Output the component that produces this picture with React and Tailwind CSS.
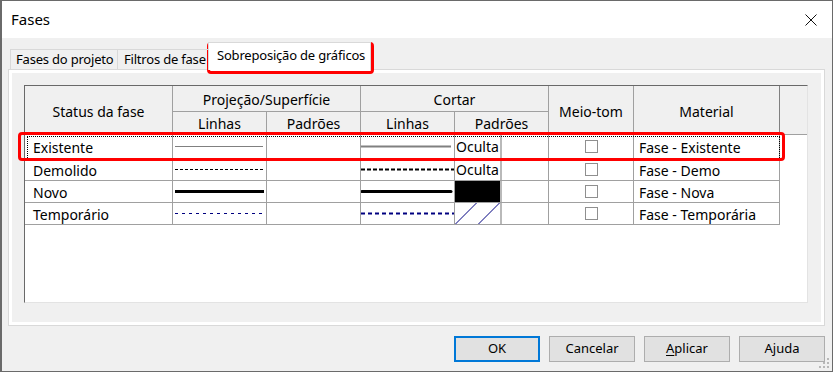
import React from 'react'

const rows = [
  {
    name: 'Existente',
    h: 'h-[24px]',
    proj: { color: '#808080', w: 1, x1: 2, x2: 90 },
    cut: { color: '#808080', w: 2, x1: 0, x2: 90 },
    pat: 'oculta',
    mat: 'Fase - Existente',
  },
  {
    name: 'Demolido',
    h: 'h-[22px]',
    proj: { color: '#000000', w: 1, x1: 2, x2: 90, dash: '3 2' },
    cut: { color: '#000000', w: 2, x1: 0, x2: 93, dash: '4 2' },
    pat: 'oculta',
    mat: 'Fase - Demo',
  },
  {
    name: 'Novo',
    h: 'h-[22px]',
    proj: { color: '#000000', w: 3, x1: 2, x2: 91 },
    cut: { color: '#000000', w: 3, x1: 1, x2: 90, cap: 'round' },
    pat: 'solid',
    mat: 'Fase - Nova',
  },
  {
    name: 'Temporário',
    h: 'h-[22px]',
    proj: { color: '#000080', w: 1, x1: 2, x2: 93, dash: '3 4' },
    cut: { color: '#000080', w: 2, x1: 0, x2: 93, dash: '4 3' },
    pat: 'hatch',
    mat: 'Fase - Temporária',
  },
]

function Stroke({ color, w, x1, x2, dash, cap }) {
  return (
    <svg width="93" height="21" className="block">
      <line
        x1={x1}
        x2={x2}
        y1="10.5"
        y2="10.5"
        stroke={color}
        strokeWidth={w}
        strokeDasharray={dash}
        strokeLinecap={cap || 'butt'}
      />
    </svg>
  )
}

function Pattern({ kind }) {
  if (kind === 'oculta') {
    return <span className="pl-px leading-none">Oculta</span>
  }
  if (kind === 'solid') {
    return <div className="h-full w-full bg-black" />
  }
  return (
    <svg width="45" height="21" className="block">
      <line x1="0.5" y1="21" x2="21.5" y2="0" stroke="#000080" strokeWidth="1" />
      <line x1="23.5" y1="21" x2="44.5" y2="0" stroke="#000080" strokeWidth="1" />
    </svg>
  )
}

export default function App() {
  const hd = 'bg-[#f0f0f0] border-r border-b border-[#a0a0a0] flex items-center justify-center'
  const cell = 'border-r border-b border-[#a0a0a0] flex items-center'

  return (
    <div className="relative w-[833px] h-[372px] border border-[#6a6a6a] border-l-2 bg-[#f0f0f0] flex flex-col font-['Noto_Sans',sans-serif] text-black overflow-hidden">
      {/* title bar */}
      <div className="h-[37px] bg-white flex items-center justify-between pl-[9px] pr-[15px] shrink-0">
        <span className="text-[15px] leading-none">Fases</span>
        <svg width="12" height="12" className="block">
          <path d="M0.5 0.5 L11.5 11.5 M11.5 0.5 L0.5 11.5" stroke="#111" strokeWidth="1" />
        </svg>
      </div>

      <div className="flex flex-col pl-[6px] pr-[7px] pt-[4px]">
        {/* tabs */}
        <div className="relative z-10 flex items-end pl-[2px] -mb-px text-[13px] tracking-[-0.2px]">
          <div className="w-[108px] h-[21px] border-l border-t border-r border-[#d9d9d9] flex items-center pl-[5px] whitespace-nowrap">
            Fases do projeto
          </div>
          <div className="w-[90px] h-[21px] border-t border-[#d9d9d9] flex items-center pl-[6px] whitespace-nowrap overflow-hidden">
            Filtros de fase
          </div>
          <div className="w-[163px] h-[28px] bg-white border-l border-t border-r border-[#d9d9d9] flex items-center pl-[8px] pb-[1px] whitespace-nowrap">
            Sobreposição de gráficos
          </div>
        </div>

        {/* tab page */}
        <div className="h-[257px] border border-[#d9d9d9]">
          <div className="h-full border-[3px] border-white bg-[#f0f0f0] pt-[12px] pl-[12px] pr-[13px]">
            <div className="relative h-[218px] border-l border-t border-[#696969] border-r border-b border-r-[#e3e3e3] border-b-[#e3e3e3] bg-white text-[14px]">
              {/* header */}
              <div className="flex">
                <div className={`${hd} w-[148px] h-[49px] pt-[3px]`}>Status da fase</div>
                <div className="flex flex-col w-[188px]">
                  <div className={`${hd} h-[26px] pt-[2px]`}>Projeção/Superfície</div>
                  <div className="flex">
                    <div className={`${hd} w-[94px] h-[23px]`}>Linhas</div>
                    <div className={`${hd} w-[94px] h-[23px]`}>Padrões</div>
                  </div>
                </div>
                <div className="flex flex-col w-[188px]">
                  <div className={`${hd} h-[26px] pt-[2px]`}>Cortar</div>
                  <div className="flex">
                    <div className={`${hd} w-[94px] h-[23px]`}>Linhas</div>
                    <div className={`${hd} w-[94px] h-[23px]`}>Padrões</div>
                  </div>
                </div>
                <div className={`${hd} w-[85px] h-[49px] pt-[3px]`}>Meio-tom</div>
                <div className={`${hd} w-[146px] h-[49px] pt-[3px] border-r-[#808080]`}>Material</div>
                <div className="bg-[#f0f0f0] border-b border-[#a0a0a0] flex-1 h-[49px]" />
              </div>

              {/* rows */}
              {rows.map((r) => (
                <div key={r.name} className={`flex ${r.h}`}>
                  <div className={`${cell} w-[148px] pl-[8px] pt-px`}>{r.name}</div>
                  <div className={`${cell} w-[94px]`}>
                    <Stroke {...r.proj} />
                  </div>
                  <div className={`${cell} w-[94px]`} />
                  <div className={`${cell} w-[94px]`}>
                    <Stroke {...r.cut} />
                  </div>
                  <div className={`${cell} w-[94px] items-stretch`}>
                    <div className="w-[47px] border-r-2 border-[#b9b9b9] flex items-center">
                      <Pattern kind={r.pat} />
                    </div>
                  </div>
                  <div className={`${cell} w-[85px] justify-center`}>
                    <div className="w-[13px] h-[13px] border border-[#8f8f8f] bg-white" />
                  </div>
                  <div className={`${cell} w-[146px] pl-[5px] pt-px`}>{r.mat}</div>
                </div>
              ))}

              {/* focus rectangle on current row */}
              <div className="absolute left-[2px] top-[50px] w-[753px] h-[22px] border-l border-t border-r border-dotted border-black pointer-events-none" />
            </div>
          </div>
        </div>

        {/* buttons */}
        <div className="flex justify-end gap-[9px] mt-[10px] text-[13px]">
          <button className="w-[86px] h-[26px] bg-[#e1e1e1] border-2 border-[#0078d7]">OK</button>
          <button className="w-[86px] h-[26px] bg-[#e1e1e1] border border-[#adadad]">Cancelar</button>
          <button className="w-[86px] h-[26px] bg-[#e1e1e1] border border-[#adadad]">
            <span className="underline underline-offset-2">A</span>plicar
          </button>
          <button className="w-[86px] h-[26px] bg-[#e1e1e1] border border-[#adadad]">Ajuda</button>
        </div>
      </div>

      {/* size grip */}
      <svg width="12" height="12" className="absolute right-[1px] bottom-[1px]">
        <rect x="8" y="0" width="2" height="2" fill="#b8b8b8" />
        <rect x="4" y="4" width="2" height="2" fill="#b8b8b8" />
        <rect x="8" y="4" width="2" height="2" fill="#b8b8b8" />
        <rect x="0" y="8" width="2" height="2" fill="#b8b8b8" />
        <rect x="4" y="8" width="2" height="2" fill="#b8b8b8" />
        <rect x="8" y="8" width="2" height="2" fill="#b8b8b8" />
      </svg>

      {/* red highlight marks */}
      <div className="absolute left-[205px] top-[41px] w-[167px] h-[32px] border-[3px] border-[#ff0000] rounded-[4px] pointer-events-none" />
      <div className="absolute left-[16px] top-[131px] w-[767px] h-[29px] border-[3px] border-[#ff0000] rounded-[4px] pointer-events-none" />
    </div>
  )
}
